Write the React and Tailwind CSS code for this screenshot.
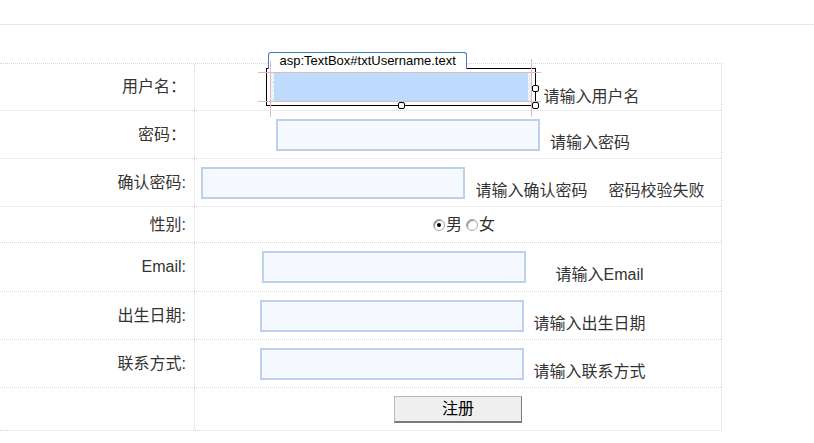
import React from 'react';

const font = "font-['Liberation_Sans','Noto_Sans_CJK_SC',sans-serif]";

function Field({ w = 'w-[264px]' }) {
  return <div className={`${w} h-[32px] border-2 border-[#bcd2ec] bg-[#f6f9ff]`} />;
}

function Hint({ children, className = '' }) {
  return <span className={`leading-none text-[16px] text-[#333] whitespace-nowrap ${className}`}>{children}</span>;
}

function Row({ label, h, last, children, center = 'pr-[10px]' }) {
  return (
    <div className={`grid grid-cols-[195px_1fr] ${h} ${last ? '' : 'border-b border-dotted border-[#d6d6d6]'}`}>
      <div className="flex items-center justify-end pr-[8px] border-r border-dotted border-[#d6d6d6] text-[16px] text-[#333]">
        {label}
      </div>
      <div className={`flex items-center justify-center ${center}`}>{children}</div>
    </div>
  );
}

function Handle({ className }) {
  return <span className={`absolute w-[7px] h-[7px] rounded-[2px] border border-black bg-white ${className}`} />;
}

function SelectedBox() {
  return (
    <div className="relative w-[270px] h-[38px] border border-black">
      {/* tag */}
      <div className="absolute left-[1px] top-[-17px] h-[17px] px-[10px] border border-b-0 border-[#3d78c9] rounded-t-[3px] bg-white text-[13px] leading-[16px] text-black whitespace-nowrap">
        asp:TextBox#txtUsername.text
      </div>
      {/* fill */}
      <div className="absolute inset-x-[3px] top-[3px] bottom-[3px] flex">
        <div className="w-[4px] bg-[repeating-linear-gradient(135deg,#dbe8f7_0px,#dbe8f7_1px,#f4f8fd_1px,#f4f8fd_3px)]" />
        <div className="flex-1 bg-[#bddbfd]" />
        <div className="w-[4px] bg-[repeating-linear-gradient(135deg,#dbe8f7_0px,#dbe8f7_1px,#f4f8fd_1px,#f4f8fd_3px)]" />
      </div>
      {/* guides */}
      <span className="absolute left-[-9px] right-[-6px] top-[3px] h-px bg-[#e2b8c0]" />
      <span className="absolute left-[-9px] right-[-6px] bottom-[3px] h-px bg-[#e2b8c0]" />
      <span className="absolute top-[-8px] bottom-[-12px] left-[3px] w-px bg-[#e2b8c0]" />
      <span className="absolute top-[-10px] bottom-[-12px] right-[3px] w-px bg-[#e2b8c0]" />
      <Handle className="right-[-4px] top-[16px]" />
      <Handle className="left-[131px] bottom-[-4px]" />
      <Handle className="right-[-4px] bottom-[-4px]" />
    </div>
  );
}

function Radio({ checked }) {
  return (
    <span className="w-[12px] h-[12px] rounded-full border border-[#a8a8a8] bg-white flex items-center justify-center shadow-[inset_1px_1px_0_#8a8a8a]">
      {checked && <span className="w-[4px] h-[4px] rounded-full bg-black" />}
    </span>
  );
}

export default function App() {
  return (
    <div className={`w-[814px] h-[443px] bg-white overflow-hidden ${font}`}>
      <div className="h-[24px]" />
      <div className="h-px bg-[#e6e6e6]" />
      <div className="h-[38px]" />

      <div className="w-[722px] border-t border-r border-b border-dotted border-[#d6d6d6]">
        <Row label="用户名：" h="h-[47px]" center="pr-[10px]">
          <div className="flex items-end gap-[7px]">
            <SelectedBox />
            <Hint className="mb-[1px]">请输入用户名</Hint>
          </div>
        </Row>
        <Row label="密码：" h="h-[48px]">
          <div className="flex items-end gap-[10px]">
            <Field />
            <Hint>请输入密码</Hint>
          </div>
        </Row>
        <Row label="确认密码:" h="h-[48px]">
          <div className="flex items-end">
            <Field />
            <Hint className="ml-[10px]">请输入确认密码</Hint>
            <Hint className="ml-[21px]">密码校验失败</Hint>
          </div>
        </Row>
        <Row label="性别:" h="h-[36px]" center="pl-[12px]">
          <div className="flex items-center text-[16px] text-[#333] leading-none">
            <Radio checked />
            <span className="ml-[1px]">男</span>
            <span className="ml-[4px]"><Radio /></span>
            <span className="ml-[1px]">女</span>
          </div>
        </Row>
        <Row label="Email:" h="h-[49px]">
          <div className="flex items-end gap-[29px]">
            <Field />
            <Hint>请输入Email</Hint>
          </div>
        </Row>
        <Row label="出生日期:" h="h-[48px]">
          <div className="flex items-end gap-[9px]">
            <Field />
            <Hint>请输入出生日期</Hint>
          </div>
        </Row>
        <Row label="联系方式:" h="h-[48px]">
          <div className="flex items-end gap-[9px]">
            <Field />
            <Hint>请输入联系方式</Hint>
          </div>
        </Row>
        <Row label="" h="h-[42px]" last center="">
          <button className="w-[128px] h-[27px] bg-[#efefef] border border-[#b8b8b8] border-r-[#7a7a7a] border-b-2 border-b-[#7a7a7a] text-[16px] leading-none text-black">
            注册
          </button>
        </Row>
      </div>
    </div>
  );
}
